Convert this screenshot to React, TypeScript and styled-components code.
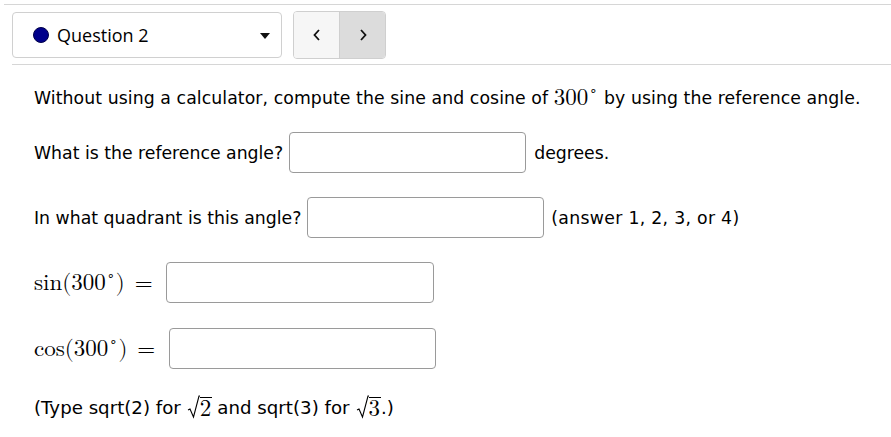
import React from "react";
import styled, { createGlobalStyle } from "styled-components";

const Global = createGlobalStyle`
  html, body { margin: 0; padding: 0; background: #fff; }
  body { font-family: "DejaVu Sans", Verdana, sans-serif; color: #000; }
`;

const Page = styled.div`
  width: 891px;
  height: 437px;
  overflow: hidden;
  padding-top: 4px;
  box-sizing: border-box;
`;

const TopRule = styled.div`
  margin-left: 4px;
  border-top: 1px solid #d6d6d6;
`;

const Header = styled.div`
  display: flex;
  align-items: center;
  gap: 11px;
  padding: 6px 0 0 12px;
`;

const Select = styled.div`
  width: 270px;
  height: 46px;
  box-sizing: border-box;
  border: 1px solid #d0d0d0;
  border-radius: 4px;
  display: flex;
  align-items: center;
  padding: 0 11px 0 20px;
  font-family: "Open Sans", sans-serif;
  font-size: 18px;
`;

const Dot = styled.span`
  width: 14px;
  height: 14px;
  border-radius: 50%;
  background: #00008b;
  border: 1px solid #00004a;
  margin-right: 8px;
`;

const Label = styled.span`
  flex: 1;
  margin-top: -1px;
`;

const Caret = styled.span`
  width: 0;
  height: 0;
  border-left: 5px solid transparent;
  border-right: 5px solid transparent;
  border-top: 6px solid #111;
  margin-top: 2px;
`;

const NavGroup = styled.div`
  display: flex;
  height: 46px;
  border: 1px solid #cfcfcf;
  border-radius: 4px;
  overflow: hidden;
`;

const NavButton = styled.div<{ $active?: boolean }>`
  width: 45px;
  display: flex;
  align-items: center;
  justify-content: center;
  background: ${(p) => (p.$active ? "#dcdcdc" : "#f6f6f6")};
  & + & { border-left: 1px solid #cfcfcf; }
`;

const BottomRule = styled.div`
  margin: 5px 0 0 12px;
  border-top: 1px solid #d6d6d6;
`;

const Body = styled.div`
  padding: 0 0 0 34px;
  font-size: 17.3px;
`;

const Line = styled.div<{ $mt: number; $ls?: number; $fs?: number }>`
  display: flex;
  align-items: center;
  margin-top: ${(p) => p.$mt}px;
  white-space: nowrap;
  letter-spacing: ${(p) => p.$ls ?? 0}px;
  ${(p) => (p.$fs ? `font-size: ${p.$fs}px;` : "")}
`;

const Spaced = styled.span`
  letter-spacing: 0.3px;
`;

const Input = styled.div<{ $w: number }>`
  width: ${(p) => p.$w}px;
  height: 41px;
  box-sizing: border-box;
  border: 1px solid #9a9a9a;
  border-radius: 4px;
  background: #fff;
`;

const Math = styled.span`
  font-family: "Latin Modern Math", "Liberation Serif", "DejaVu Serif", serif;
  font-size: 23px;
  letter-spacing: 0;
`;

const Sup = styled.sup`
  font-family: "DejaVu Sans", sans-serif;
  font-size: 13px;
  vertical-align: 10px;
  margin: 0 1px 0 1px;
  line-height: 0;
`;

const Chevron = ({ dir }: { dir: "l" | "r" }) => (
  <svg width="10" height="14" viewBox="0 0 10 14">
    <path
      d={dir === "l" ? "M7 2 L2.5 7 L7 12" : "M3 2 L7.5 7 L3 12"}
      fill="none"
      stroke="#111"
      strokeWidth="1.8"
    />
  </svg>
);

const SqrtBody = styled.span`
  border-top: 1px solid #000;
  line-height: 21px;
  padding-right: 1px;
`;

const SqrtWrap = styled(Math)<{ $mr: number }>`
  display: inline-flex;
  align-items: flex-end;
  margin: 0 ${(p) => p.$mr}px 0 6px;
`;

const Sqrt = ({ n, mr }: { n: string; mr: number }) => (
  <SqrtWrap $mr={mr}>
    <svg width="13" height="24" viewBox="0 0 13 24">
      <path d="M1 15 L3 14 L6.5 22 L12 1 L13 1" fill="none" stroke="#000" strokeWidth="1.1" />
    </svg>
    <SqrtBody>{n}</SqrtBody>
  </SqrtWrap>
);

const Gap = styled.span<{ $w: number }>`
  display: inline-block;
  width: ${(p) => p.$w}px;
`;

export default function App() {
  return (
    <Page>
      <Global />
      <TopRule />
      <Header>
        <Select>
          <Dot />
          <Label>Question 2</Label>
          <Caret />
        </Select>
        <NavGroup>
          <NavButton>
            <Chevron dir="l" />
          </NavButton>
          <NavButton $active>
            <Chevron dir="r" />
          </NavButton>
        </NavGroup>
      </Header>
      <BottomRule />
      <Body>
        <Line $mt={19} $ls={0.08}>
          Without using a calculator, compute the sine and cosine of&nbsp;
          <Math>
            300<Sup>∘</Sup>
          </Math>
          &nbsp;by using the reference angle.
        </Line>
        <Line $mt={20}>
          What is the reference angle?
          <Gap $w={6} />
          <Input $w={237} />
          <Gap $w={8} />
          degrees.
        </Line>
        <Line $mt={24}>
          In what quadrant is this angle?
          <Gap $w={6} />
          <Input $w={237} />
          <Gap $w={7} />
          <Spaced>(answer 1, 2, 3, or 4)</Spaced>
        </Line>
        <Line $mt={24}>
          <Math>
            sin(300<Sup>∘</Sup>)<Gap $w={10} />=
          </Math>
          <Gap $w={13} />
          <Input $w={268} />
        </Line>
        <Line $mt={25}>
          <Math>
            cos(300<Sup>∘</Sup>)<Gap $w={10} />=
          </Math>
          <Gap $w={14} />
          <Input $w={267} />
        </Line>
        <Line $mt={26} $fs={18.2}>
          (Type sqrt(2) for<Sqrt n="2" mr={5} />and sqrt(3) for<Sqrt n="3" mr={0} />.)
        </Line>
      </Body>
    </Page>
  );
}
